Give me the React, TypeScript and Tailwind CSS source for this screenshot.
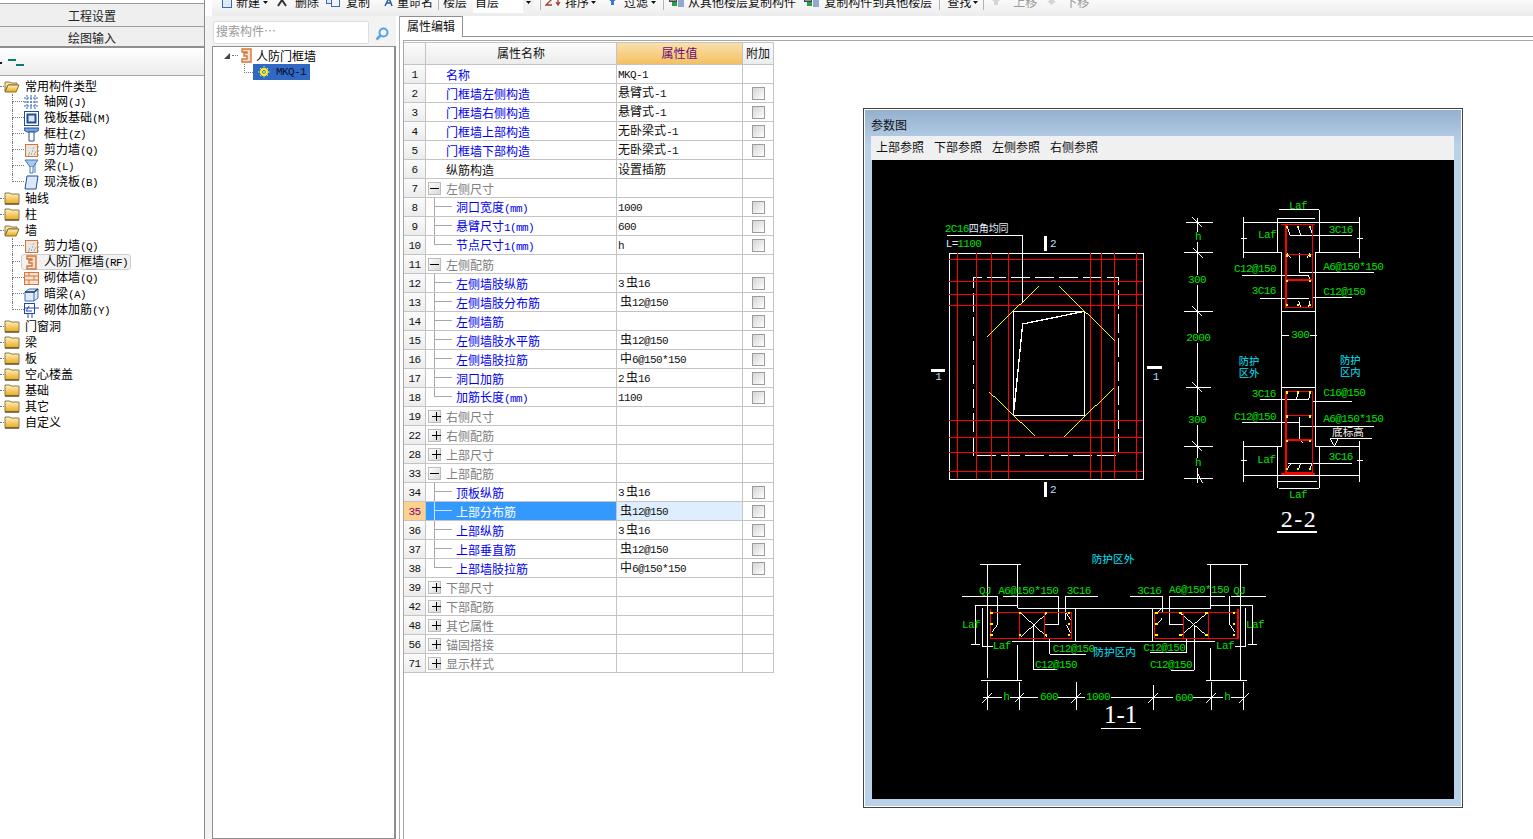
import React from "react";

const cjk = "font-['Noto_Sans_CJK_SC',sans-serif]";
const mono = "font-['Liberation_Mono','Noto_Sans_CJK_SC',monospace]";

// ascii runs get the narrow 6px look of the original bitmap font
const T = ({ s }: { s: string }) => (
  <>
    {s.split(/([\x00-\x7f]+)/).map((part, i) =>
      /^[\x00-\x7f]+$/.test(part) ? (
        <span key={i} className={`${mono} text-[11px] tracking-[-0.6px]`}>
          {part}
        </span>
      ) : (
        <span key={i}>{part}</span>
      )
    )}
  </>
);

const Folder = ({ open }: { open?: boolean }) => (
  <svg width="16" height="14" viewBox="0 0 16 14" className="shrink-0">
    <defs>
      <linearGradient id="fold" x1="0" y1="0" x2="0" y2="1">
        <stop offset="0" stopColor="#fff3b8" />
        <stop offset="1" stopColor="#e8a820" />
      </linearGradient>
    </defs>
    {open ? (
      <>
        <path d="M1 3h5l1 1h6v2H4L1 12z" fill="#f6e3a0" stroke="#8a7a50" />
        <path d="M1 13l3-7h11l-3 7z" fill="url(#fold)" stroke="#8a6a20" />
      </>
    ) : (
      <>
        <path d="M1 2h5l1 1h8v10H1z" fill="url(#fold)" stroke="#8a7a50" />
        <path d="M1 13h14" stroke="#4a3a10" />
      </>
    )}
  </svg>
);

const TreeIcon = ({ name }: { name: string }) => {
  const blue = "#2f62b0";
  const orange = "#d2763c";
  return (
    <svg width="15" height="15" viewBox="0 0 15 15" className="shrink-0">
      {name === "grid" && (
        <path d="M3 0v15M7 0v15M11 0v15M0 3h15M0 7h15M0 11h15" stroke={blue} strokeDasharray="2 1" fill="none" />
      )}
      {name === "raft" && (
        <>
          <rect x="0.5" y="0.5" width="14" height="14" fill="#fff" stroke="#1f4f96" strokeWidth="1" />
          <rect x="3.5" y="3.5" width="8" height="8" fill="#dfe8f4" stroke="#1f4f96" strokeWidth="2" />
        </>
      )}
      {name === "column" && (
        <>
          <path d="M0 1h15v2l-3 2H3L0 3z" fill="#7aa6dc" stroke="#1f4f96" />
          <path d="M5 5h5v9H5z" fill="#fff" stroke="#1f4f96" />
        </>
      )}
      {name === "shear" && (
        <>
          <rect x="1.5" y="1.5" width="12" height="12" fill="#e8e4de" stroke={orange} />
          <path d="M5 10h1M8 8h1M10 11h1M7 11h1M9 5h1M4 12h1M11 9h1" stroke="#888" />
          <path d="M13 4h2M13 8h2M13 12h2" stroke={orange} />
        </>
      )}
      {name === "beam" && (
        <>
          <path d="M1 1h13L9 8H6z" fill="#a8c8ec" stroke="#3f78c0" />
          <path d="M6 8v6h3V8M11 5v9" fill="#fff" stroke="#3f78c0" />
        </>
      )}
      {name === "slab" && <path d="M3 1h11l-2 13H1z" fill="#dce8f8" stroke="#1f4f96" />}
      {name === "door" && (
        <path d="M3 1h9v13H3v-3h5V8H5V5h3V4H3z" fill="#f8ddc8" stroke={orange} strokeWidth="1.4" />
      )}
      {name === "brick" && (
        <>
          <rect x="0.5" y="1.5" width="14" height="12" fill="#fbe2cf" stroke={orange} />
          <path d="M0 5h15M0 9h15M5 1v4M10 5v4M5 9v4" stroke={orange} fill="none" />
        </>
      )}
      {name === "lintel" && (
        <>
          <path d="M1 5l4-3h9v9l-4 3H1z" fill="#dfeaf6" stroke="#3f6ea8" />
          <path d="M1 5h9v9M10 5l4-3" fill="none" stroke="#3f6ea8" />
          <path d="M1 5h9l4-3" fill="none" stroke="#20466f" strokeWidth="1.5" />
        </>
      )}
      {name === "rebar" && (
        <>
          <rect x="0.5" y="0.5" width="10" height="10" fill="none" stroke="#2244bb" />
          <path d="M0 5h15M5 3l-3 5h6M4 10v5M8 10v5" fill="none" stroke="#2244bb" />
        </>
      )}
    </svg>
  );
};

type TreeChild = { label: string; key?: string; icon: string; active?: boolean };
type TreeGroup = { label: string; items?: TreeChild[] };

const tree: TreeGroup[] = [
  {
    label: "常用构件类型",
    items: [
      { label: "轴网", key: "(J)", icon: "grid" },
      { label: "筏板基础", key: "(M)", icon: "raft" },
      { label: "框柱", key: "(Z)", icon: "column" },
      { label: "剪力墙", key: "(Q)", icon: "shear" },
      { label: "梁", key: "(L)", icon: "beam" },
      { label: "现浇板", key: "(B)", icon: "slab" },
    ],
  },
  { label: "轴线" },
  { label: "柱" },
  {
    label: "墙",
    items: [
      { label: "剪力墙", key: "(Q)", icon: "shear" },
      { label: "人防门框墙", key: "(RF)", icon: "door", active: true },
      { label: "砌体墙", key: "(Q)", icon: "brick" },
      { label: "暗梁", key: "(A)", icon: "lintel" },
      { label: "砌体加筋", key: "(Y)", icon: "rebar" },
    ],
  },
  { label: "门窗洞" },
  { label: "梁" },
  { label: "板" },
  { label: "空心楼盖" },
  { label: "基础" },
  { label: "其它" },
  { label: "自定义" },
];

const ComponentTree = () => (
  <div className="flex-1 border-t border-[#a8a8a8] bg-white pt-[2px] text-[12px] leading-4 text-black">
    {tree.map((group) => (
      <div key={group.label}>
        <div className="flex h-4 items-center">
          <div className="w-1 border-t border-dotted border-[#777]" />
          <Folder open={!!group.items} />
          <span className="ml-[5px]">{group.label}</span>
        </div>
        {group.items?.map((item, i) => (
          <div key={item.label + i} className="ml-3 flex h-4 items-center">
            <div className="flex h-4 w-3 shrink-0 flex-col">
              <div className="h-2 border-b border-l border-dotted border-[#777]" />
              {i < group.items!.length - 1 && <div className="h-2 border-l border-dotted border-[#777]" />}
              {i === group.items!.length - 1 && <div className="h-2" />}
            </div>
            <div
              className={
                item.active
                  ? "-ml-[3px] flex h-4 w-[110px] items-center rounded-[3px] border border-[#cfcfcf] bg-[#f2f2f2] pl-[2px]"
                  : "flex h-4 items-center"
              }
            >
              <TreeIcon name={item.icon} />
              <span className="ml-[5px] whitespace-nowrap">
                <T s={item.label + item.key} />
              </span>
            </div>
          </div>
        ))}
      </div>
    ))}
  </div>
);

const LeftPane = () => (
  <div className={`flex w-[205px] shrink-0 flex-col border-r border-[#8c8c8c] ${cjk}`}>
    <div className="h-[4px] border-b border-[#9a9a9a] bg-white" />
    <div className="flex h-[23px] items-center justify-center border-b border-[#a0a0a0] bg-[#efefef] pr-[20px] pt-[2px] text-[12px] text-[#222]">
      工程设置
    </div>
    <div className="flex h-[21px] items-center justify-center border-b-2 border-[#8e8e8e] bg-[#efefef] pr-[20px] pt-[2px] text-[12px] text-[#222]">
      绘图输入
    </div>
    <div className="flex h-[27px] items-center bg-gradient-to-b from-white to-[#ececec] pt-[2px]">
      <div className="h-[2px] w-[2px] bg-[#114]" />
      <div className="ml-[6px] flex flex-col">
        <div className="h-[2px] w-2 bg-[#0d7a78]" />
        <div className="ml-2 mt-[3px] h-[2px] w-2 bg-[#0d7a78]" />
      </div>
    </div>
    <ComponentTree />
  </div>
);

const Caret = ({ ml }: { ml: string }) => (
  <svg width="5" height="3" viewBox="0 0 5 3" className={`mt-[1px] shrink-0 ${ml}`}>
    <path d="M0 0h5L2.5 3z" fill="#111" />
  </svg>
);

const Sep = ({ ml }: { ml: string }) => <div className={`h-[10px] w-px shrink-0 bg-[#b4b4b4] ${ml}`} />;

const ToolIcon = ({ w, ml, kind }: { w: number; ml: string; kind: string }) => (
  <svg width={w} height="12" viewBox={`0 0 ${w} 12`} className={`-mt-[3px] shrink-0 ${ml}`}>
    {kind === "new" && <rect x="0.5" y="2.5" width="9" height="8" fill="#dfe9f7" stroke="#3b6bb3" />}
    {kind === "del" && <path d="M1 9l4-6 4 6" stroke="#333" strokeWidth="2" fill="none" />}
    {kind === "copy" && (
      <>
        <rect x="0.5" y="0.5" width="8" height="6" fill="#dfe9f7" stroke="#3b6bb3" />
        <rect x="5.5" y="2.5" width="8" height="7" fill="#f2f6fc" stroke="#3b6bb3" />
      </>
    )}
    {kind === "rename" && <path d="M8 9L12 1l3 8M9.5 6h4" stroke="#2c5aa8" strokeWidth="1.5" fill="none" />}
    {kind === "sort" && (
      <path d="M1 2h6L1 8h6M13 1v6M11 5l2 3 2-3" stroke="#a04030" fill="none" strokeWidth="1.3" />
    )}
    {kind === "filter" && <path d="M4.5 0l3 4H6v4H3V4H1.5z" fill="#3b78c8" />}
    {kind === "floor" && (
      <>
        <rect x="0.5" y="0.5" width="7" height="4" fill="#8a9ab0" stroke="#444" />
        <rect x="3" y="5" width="5" height="4" fill="#2aa040" />
        <path d="M9 1h6M9 3h6M9 5h6M9 7h6M9 9h6" stroke="#2c5aa8" />
      </>
    )}
    {kind === "up" && <path d="M6 0l4 4H8v4H4V4H2z" fill="#d4d4d4" />}
    {kind === "down" && <path d="M4 0h5v4h2L6.500 8 2 4h2z" fill="#d4d4d4" />}
  </svg>
);

const ToolText = ({ ml, children, muted }: { ml: string; children: React.ReactNode; muted?: boolean }) => (
  <span className={`shrink-0 whitespace-nowrap leading-[12px] -mt-[4px] ${ml} ${muted ? "text-[#9a9a9a]" : "text-[#111]"}`}>
    {children}
  </span>
);

const Toolbar = () => (
  <div className={`flex h-4 shrink-0 items-start overflow-hidden bg-gradient-to-b from-[#fafafa] to-[#ececec] text-[12px] ${cjk}`}>
    <ToolIcon w={10} ml="ml-[10px]" kind="new" />
    <ToolText ml="ml-[4px]">新建</ToolText>
    <Caret ml="ml-[3px]" />
    <ToolIcon w={11} ml="ml-[9px]" kind="del" />
    <ToolText ml="ml-[7px]">删除</ToolText>
    <ToolIcon w={15} ml="ml-[7px]" kind="copy" />
    <ToolText ml="ml-[5px]">复制</ToolText>
    <ToolIcon w={16} ml="ml-[7px]" kind="rename" />
    <ToolText ml="ml-[4px]">重命名</ToolText>
    <Sep ml="ml-[5px]" />
    <ToolText ml="ml-[4px]">楼层</ToolText>
    <div className="ml-[6px] flex h-[13px] w-[60px] shrink-0 items-start justify-between bg-white pl-[2px]">
      <span className="-mt-[4px] leading-[12px] text-[#111]">首层</span>
      <div className="flex h-[13px] w-[10px] justify-center bg-[#f0f0f0]">
        <Caret ml="ml-0" />
      </div>
    </div>
    <Sep ml="ml-[7px]" />
    <ToolIcon w={16} ml="ml-[4px]" kind="sort" />
    <ToolText ml="ml-[4px]">排序</ToolText>
    <Caret ml="ml-[2px]" />
    <ToolIcon w={9} ml="ml-[12px]" kind="filter" />
    <ToolText ml="ml-[7px]">过滤</ToolText>
    <Caret ml="ml-[3px]" />
    <Sep ml="ml-[7px]" />
    <ToolIcon w={16} ml="ml-[5px]" kind="floor" />
    <ToolText ml="ml-[3px]">从其他楼层复制构件</ToolText>
    <ToolIcon w={16} ml="ml-[8px]" kind="floor" />
    <ToolText ml="ml-[4px]">复制构件到其他楼层</ToolText>
    <Sep ml="ml-[7px]" />
    <ToolText ml="ml-[7px]">查找</ToolText>
    <Caret ml="ml-[2px]" />
    <Sep ml="ml-[5px]" />
    <ToolIcon w={14} ml="ml-[6px]" kind="up" />
    <ToolText ml="ml-[9px]" muted>上移</ToolText>
    <ToolIcon w={14} ml="ml-[8px]" kind="down" />
    <ToolText ml="ml-[6px]" muted>下移</ToolText>
  </div>
);

const MiddlePane = () => (
  <div className={`flex w-[184px] shrink-0 flex-col bg-[#f3f3f3] ${cjk}`}>
    <div className="flex h-[30px] items-start pl-px pt-[5px]">
      <div className="flex h-[23px] w-[156px] items-center rounded-[2px] border border-[#dedede] bg-white pb-[3px] pl-[2px] text-[12px] text-[#9a9a9a]">
        搜索构件…
      </div>
      <svg width="14" height="14" viewBox="0 0 14 14" className="ml-[6px] mt-[6px]">
        <circle cx="8.500" cy="5.500" r="4" fill="#eef6fd" stroke="#57a4e4" strokeWidth="2" />
        <path d="M5.500 8.500L1.500 12.500" stroke="#57a4e4" strokeWidth="2.500" />
      </svg>
    </div>
    <div className="flex-1 border border-r-2 border-[#8f8f8f] bg-white text-[12px] text-black">
      <div className="flex h-[17px] items-center pl-[11px]">
        <svg width="6" height="6" viewBox="0 0 6 6">
          <path d="M6 0v6H0z" fill="#444" />
        </svg>
        <div className="ml-[2px] w-[6px] border-t border-dotted border-[#777]" />
        <div className="ml-[1px]">
          <TreeIcon name="door" />
        </div>
        <span className="ml-[2px]">人防门框墙</span>
      </div>
      <div className="flex h-4 items-start pl-[31px]">
        <div className="h-[9px] w-[9px] border-b border-l border-dotted border-[#777]" />
        <div className="flex h-4 w-[57px] items-center bg-[#2f69c4] pl-[5px]">
          <svg width="12" height="12" viewBox="0 0 12 12">
            <circle cx="6" cy="6" r="3" fill="none" stroke="#ffee33" strokeWidth="2" />
            <path d="M6 0v12M0 6h12M2 2l8 8M10 2l-8 8" stroke="#ffee33" strokeDasharray="1.500 1" />
          </svg>
          <span className={`ml-[6px] ${mono} text-[11px] tracking-[-0.6px] text-[#0a0f2a]`}>MKQ-1</span>
        </div>
      </div>
    </div>
  </div>
);

type Row = {
  no: number;
  name: string;
  kind: "link" | "plain" | "open" | "closed" | "child" | "last";
  value?: string;
  check?: boolean;
  selected?: boolean;
};

const rows: Row[] = [
  { no: 1, name: "名称", kind: "link", value: "MKQ-1" },
  { no: 2, name: "门框墙左侧构造", kind: "link", value: "悬臂式-1", check: true },
  { no: 3, name: "门框墙右侧构造", kind: "link", value: "悬臂式-1", check: true },
  { no: 4, name: "门框墙上部构造", kind: "link", value: "无卧梁式-1", check: true },
  { no: 5, name: "门框墙下部构造", kind: "link", value: "无卧梁式-1", check: true },
  { no: 6, name: "纵筋构造", kind: "plain", value: "设置插筋" },
  { no: 7, name: "左侧尺寸", kind: "open" },
  { no: 8, name: "洞口宽度(mm)", kind: "child", value: "1000", check: true },
  { no: 9, name: "悬臂尺寸1(mm)", kind: "child", value: "600", check: true },
  { no: 10, name: "节点尺寸1(mm)", kind: "last", value: "h", check: true },
  { no: 11, name: "左侧配筋", kind: "open" },
  { no: 12, name: "左侧墙肢纵筋", kind: "child", value: "3虫16", check: true },
  { no: 13, name: "左侧墙肢分布筋", kind: "child", value: "虫12@150", check: true },
  { no: 14, name: "左侧墙筋", kind: "child", check: true },
  { no: 15, name: "左侧墙肢水平筋", kind: "child", value: "虫12@150", check: true },
  { no: 16, name: "左侧墙肢拉筋", kind: "child", value: "中6@150*150", check: true },
  { no: 17, name: "洞口加筋", kind: "child", value: "2虫16", check: true },
  { no: 18, name: "加筋长度(mm)", kind: "last", value: "1100", check: true },
  { no: 19, name: "右侧尺寸", kind: "closed" },
  { no: 22, name: "右侧配筋", kind: "closed" },
  { no: 28, name: "上部尺寸", kind: "closed" },
  { no: 33, name: "上部配筋", kind: "open" },
  { no: 34, name: "顶板纵筋", kind: "child", value: "3虫16", check: true },
  { no: 35, name: "上部分布筋", kind: "child", value: "虫12@150", check: true, selected: true },
  { no: 36, name: "上部纵筋", kind: "child", value: "3虫16", check: true },
  { no: 37, name: "上部垂直筋", kind: "child", value: "虫12@150", check: true },
  { no: 38, name: "上部墙肢拉筋", kind: "last", value: "中6@150*150", check: true },
  { no: 39, name: "下部尺寸", kind: "closed" },
  { no: 42, name: "下部配筋", kind: "closed" },
  { no: 48, name: "其它属性", kind: "closed" },
  { no: 56, name: "锚固搭接", kind: "closed" },
  { no: 71, name: "显示样式", kind: "closed" },
];

const ExpandBox = ({ open }: { open: boolean }) => (
  <div className="ml-[2px] mr-[5px] flex h-[13px] w-[13px] shrink-0 items-center justify-center border border-[#bcbcbc] bg-gradient-to-br from-white to-[#d8d8d8]">
    <div className="flex h-[9px] w-[9px] items-center justify-center">
      <div className="h-px w-[9px] bg-black" />
      {!open && <div className="-ml-[5px] h-[9px] w-px bg-black" />}
    </div>
  </div>
);

const Connector = ({ last, selected }: { last: boolean; selected?: boolean }) => (
  <div className="ml-2 mr-1 flex h-[18px] w-[18px] shrink-0 flex-col">
    <div className={`h-[9px] border-b border-l ${selected ? "border-[#cfe4fb]" : "border-[#a8a8a8]"}`} />
    <div className={`h-[9px] ${last ? "" : "border-l"} ${selected ? "border-[#cfe4fb]" : "border-[#a8a8a8]"}`} />
  </div>
);

const Value = ({ value }: { value: string }) => {
  const count = value.match(/^(\d)虫(\d+)$/);
  if (count) {
    return (
      <span className="pl-[1px]">
        <T s={count[1]} />
        <span className="ml-[2px]">虫</span>
        <T s={count[2]} />
      </span>
    );
  }
  const indent = value.startsWith("虫") || value.startsWith("中");
  return (
    <span className={indent ? "pl-[3px]" : "pl-[1px]"}>
      <T s={value} />
    </span>
  );
};

const PropertyRow = ({ row }: { row: Row }) => {
  const isChild = row.kind === "child" || row.kind === "last";
  const isGroup = row.kind === "open" || row.kind === "closed";
  return (
    <div className="flex h-[19px] border-b border-[#c4c4c4] text-[12px] leading-[18px]">
      <div
        className={
          row.selected
            ? "flex w-[22px] shrink-0 items-center justify-center border-r border-[#c4c4c4] bg-[#fdd28c] pt-[2px] text-[#800080]"
            : "flex w-[22px] shrink-0 items-center justify-center border-r border-[#c4c4c4] bg-gradient-to-b from-[#fbfbfb] to-[#ececec] pt-[2px] text-[#111]"
        }
      >
        <span className={`${mono} text-[11px] tracking-[-0.6px]`}>{row.no}</span>
      </div>
      <div
        className={
          row.selected
            ? "flex w-[191px] shrink-0 items-center border-r border-[#c4c4c4] bg-[#3399ff] text-white"
            : "flex w-[191px] shrink-0 items-center border-r border-[#c4c4c4]"
        }
      >
        {isGroup && <ExpandBox open={row.kind === "open"} />}
        {isChild && <Connector last={row.kind === "last"} selected={row.selected} />}
        <span
          className={
            row.selected
              ? "whitespace-nowrap pt-[2px]"
              : isGroup
                ? "whitespace-nowrap pt-[2px] text-[#808080]"
                : row.kind === "plain"
                  ? "ml-5 whitespace-nowrap pt-[2px] text-[#111]"
                  : row.kind === "link"
                    ? "ml-5 whitespace-nowrap pt-[2px] text-[#0000ee]"
                    : "whitespace-nowrap pt-[2px] text-[#0000ee]"
          }
        >
          <T s={row.name} />
        </span>
      </div>
      <div
        className={
          row.selected
            ? "flex w-[126px] shrink-0 items-center whitespace-nowrap border-r border-[#c4c4c4] bg-[#deeefe] text-[#111]"
            : "flex w-[126px] shrink-0 items-center whitespace-nowrap border-r border-[#c4c4c4] text-[#111]"
        }
      >
        {row.value && <Value value={row.value} />}
      </div>
      <div className="flex w-[31px] shrink-0 items-center justify-center border-r border-[#c4c4c4]">
        {row.check && (
          <div className="h-[13px] w-[13px] border border-[#9c9c9c] bg-gradient-to-br from-[#d4d4d4] to-white" />
        )}
      </div>
    </div>
  );
};

const PropertyTable = () => (
  <div className="mt-px w-[370px]">
    <div className="flex h-[23px] border-b border-t border-[#c4c4c4] pb-0 text-[12px]">
      <div className="w-[22px] border-r border-[#c4c4c4] bg-gradient-to-b from-[#fbfbfb] to-[#ececec]" />
      <div className="flex w-[191px] items-center justify-center border-r border-[#c4c4c4] bg-gradient-to-b from-[#fbfbfb] to-[#ececec] pb-[2px] text-[#111]">
        属性名称
      </div>
      <div className="flex w-[126px] items-center justify-center border-r border-[#c4c4c4] bg-gradient-to-b from-[#fbe0aa] to-[#f3c061] pb-[2px] text-[#6a0a7a]">
        属性值
      </div>
      <div className="flex w-[31px] items-center justify-center border-r border-[#c4c4c4] bg-gradient-to-b from-[#fbfbfb] to-[#ececec] pb-[2px] text-[#111]">
        附加
      </div>
    </div>
    {rows.map((row) => (
      <PropertyRow key={row.no} row={row} />
    ))}
  </div>
);

const green = "#00e000";
const G = ({ x, y, t, fill = green, size = 33 }: { x: number; y: number; t: string; fill?: string; size?: number }) => (
  <text x={x} y={y} fill={fill} fontSize={size} letterSpacing={size === 33 ? -1.8 : 0}>
    {t}
  </text>
);

const Dots = ({ pts }: { pts: number[][] }) => (
  <>
    {pts.map(([x, y], i) => (
      <rect key={i} x={x - 3.5} y={y - 3.5} width="7" height="7" fill="#ffff00" />
    ))}
  </>
);

// zoomed crop coordinates, so 3 units = 1px on the page
const PlanView = () => (
  <g transform="translate(930 200) scale(0.33333)" fill="none" strokeWidth="3">
    <rect x="58" y="160" width="582" height="678" stroke="#fff" />
    <path d="M131 768V232H565V768H131" stroke="#fff" strokeDasharray="58 14" />
    <path
      d="M58 178H640M58 244H640M58 283H640M58 316H640M58 661H640M58 712H640M58 757H640M58 814H640M82 160V838M139 160V838M184 160V838M235 160V838M481 160V838M514 160V838M553 160V838M619 160V838"
      stroke="#ff0000"
    />
    <rect x="250" y="334" width="213" height="312" stroke="#fff" />
    <path d="M463 334L278 372L252 630" stroke="#fff" strokeWidth="4" />
    <path d="M52 106H277V310" stroke="#fff" />
    <path d="M172 409L326 259M388 259L556 424M178 576L314 707M402 710L551 565" stroke="#ffff00" />
    <path d="M347 108V152M347 847V891M3 511H45M651 502H696" stroke="#fff" strokeWidth="9" />
    <G x={44} y={96} t="2C16" />
    <G x={116} y={96} t="四角均同" fill="#e8f0ff" size={30} />
    <G x={47} y={140} t="L=" fill="#d8e8ff" />
    <G x={82} y={140} t="1100" />
    <G x={360} y={141} t="2" fill="#bcd8ff" />
    <G x={360} y={879} t="2" fill="#bcd8ff" />
    <G x={16} y={541} t="1" fill="#bcd8ff" />
    <G x={668} y={541} t="1" fill="#bcd8ff" />
  </g>
);

const SectionTwo = () => (
  <g transform="translate(1170 190) scale(0.33333)" fill="none" strokeWidth="3">
    <path
      stroke="#fff"
      d="M83 85V125M83 155V255M83 285V430M83 460V675M83 705V805M83 835V880M48 97H128M42 189H128M42 364H128M48 592H122M42 769H128M42 865H128M68 82L98 112M68 174L98 204M68 349L98 379M68 577L98 607M68 754L98 784M83 850L98 880"
    />
    <path
      stroke="#fff"
      d="M220 97H568M220 80V203M568 80V203M220 187H336M436 187H568M328 60H448M448 60V187M322 85H436M322 85V187M336 187V770M436 187V770M336 364H436M336 592H436M212 145H230M560 145H578"
    />
    <path
      stroke="#fff"
      d="M360 136H546M216 256H416M270 325H416M426 322H546M388 247H612M388 190V247M270 630H416M426 634H546M216 699H388M388 710H612M388 680V745M355 820H546M480 745H606M480 745L493 768L506 745M333 436H358M420 436H442"
    />
    <path
      stroke="#fff"
      d="M220 770H336M436 770H568M220 858H568M220 754V875M568 754V875M322 770V895M448 770V895M322 875H440M328 895H448M212 812H230M560 812H578"
    />
    <path
      stroke="#fff"
      d="M352 112L360 136M385 112L392 136M420 112L428 136M352 332L345 350M385 332L392 350M420 332L416 350M352 260L345 270M415 256L420 270M352 610L345 630M385 610L378 630M420 610L416 630M352 838L362 820M385 838L392 820M420 838L426 820M388 745L398 760M352 190L362 204M420 190L410 204"
    />
    <path
      stroke="#ff0000"
      strokeWidth="4"
      d="M334 103H436M348 103V352H428V103M348 193H428M348 270H428M348 604H428V848H348V604M334 852H436M348 676H428M348 750H428"
    />
    <Dots
      pts={[
        [352, 112], [385, 112], [420, 112], [352, 197], [420, 197], [352, 274], [420, 274], [352, 345], [385, 345], [420, 345],
        [352, 608], [385, 608], [420, 608], [352, 680], [420, 680], [352, 754], [420, 754], [352, 838], [385, 838], [420, 838],
      ]}
    />
    <G x={357} y={56} t="Laf" />
    <G x={75} y={150} t="h" />
    <G x={54} y={278} t="300" />
    <G x={49} y={452} t="2000" />
    <G x={54} y={698} t="300" />
    <G x={75} y={828} t="h" />
    <G x={264} y={143} t="Laf" />
    <G x={476} y={130} t="3C16" />
    <G x={192} y={246} t="C12@150" />
    <G x={460} y={240} t="A6@150*150" />
    <G x={245} y={312} t="3C16" />
    <G x={460} y={315} t="C12@150" />
    <G x={364} y={443} t="300" />
    <G x={245} y={622} t="3C16" />
    <G x={460} y={618} t="C16@150" />
    <G x={192} y={690} t="C12@150" />
    <G x={460} y={696} t="A6@150*150" />
    <G x={262} y={818} t="Laf" />
    <G x={476} y={810} t="3C16" />
    <G x={357} y={923} t="Laf" />
    <G x={206} y={525} t="防护" fill="#00e8ff" size={31} />
    <G x={206} y={560} t="区外" fill="#00e8ff" size={31} />
    <G x={510} y={522} t="防护" fill="#00e8ff" size={31} />
    <G x={510} y={558} t="区内" fill="#00e8ff" size={31} />
    <G x={486} y={738} t="底标高" fill="#f4f4f4" size={32} />
    <text x={332} y={1012} fill="#fff" fontSize="72" textLength="105" className="font-['Liberation_Serif',serif]">
      2-2
    </text>
    <path d="M321 1026H441" stroke="#fff" strokeWidth="5" />
  </g>
);

const SectionOne = () => (
  <g transform="translate(950 545) scale(0.33333)" fill="none" strokeWidth="3">
    <path
      stroke="#fff"
      d="M90 58H212M112 58V150M203 58V190M772 58H895M782 58V190M872 58V150M36 154H140M160 154H326V238H283M346 154H444M346 154V225M540 154H638V205M658 154H825M658 154V238H700M842 154H948"
    />
    <path
      stroke="#fff"
      d="M203 190H782M76 182H203M782 182H908M186 290H795M376 190V290M607 190V290M76 182V298M64 298H90M97 190V306H128M112 150V400M203 300V405M93 406H216M768 406H890M782 310V406M872 150V406M908 182V298M895 298H920M886 190V306H856M142 154V240L125 262M840 154V240L855 262"
    />
    <path
      stroke="#fff"
      d="M213 205L290 275M290 205L213 275M692 205L770 272M770 205L692 272M250 240V374H320M300 280V328H408M710 280V322H600M733 240V376H662M350 205L362 225M350 240L362 265M620 205L636 188M620 240L636 220"
    />
    <path
      stroke="#fff"
      d="M100 457H155M180 457H265M325 457H405M482 457H670M730 457H820M842 457H885M112 410V495M208 410V495M379 410V495M610 420V495M784 410V495M881 410V495M98 473L128 443M194 473L224 443M365 473L395 443M596 473L626 443M770 473L800 443M867 473L897 443"
    />
    <path stroke="#ff0000" d="M120 202H365V280H120M208 202V280M283 202V280M615 202H863M615 202V280H863M700 202V280M776 202V280" />
    <path stroke="#ff0000" strokeWidth="5" d="M122 192V282M864 192V282" />
    <Dots
      pts={[
        [125, 205], [125, 238], [125, 271], [210, 205], [288, 205], [210, 271], [288, 271], [358, 205], [358, 238], [358, 271],
        [620, 205], [620, 238], [620, 271], [692, 205], [770, 205], [692, 271], [770, 271], [853, 205], [853, 238], [853, 271],
      ]}
    />
    <G x={425} y={55} t="防护区外" fill="#00e8ff" size={32} />
    <G x={87} y={146} t="QJ" />
    <G x={145} y={146} t="A6@150*150" />
    <G x={350} y={146} t="3C16" />
    <G x={562} y={146} t="3C16" />
    <G x={657} y={144} t="A6@150*150" />
    <G x={850} y={146} t="QJ" />
    <G x={36} y={248} t="Laf" />
    <G x={888} y={248} t="Laf" />
    <G x={128} y={312} t="Laf" />
    <G x={798} y={312} t="Laf" />
    <G x={308} y={320} t="C12@150" />
    <G x={580} y={318} t="C12@150" />
    <G x={430} y={332} t="防护区内" fill="#00e8ff" size={32} />
    <G x={255} y={368} t="C12@150" />
    <G x={600} y={368} t="C12@150" />
    <G x={160} y={465} t="h" />
    <G x={270} y={465} t="600" />
    <G x={408} y={465} t="1000" />
    <G x={675} y={467} t="600" />
    <G x={823} y={465} t="h" />
    <text x={462} y={535} fill="#fff" fontSize="75" textLength="100" className="font-['Liberation_Serif',serif]">
      1-1
    </text>
    <path d="M453 551H573" stroke="#fff" strokeWidth="5" />
  </g>
);

const ParamDialog = () => (
  <div className={`absolute left-[863px] top-[108px] h-[700px] w-[600px] border border-[#444] ${cjk}`}>
    <div className="flex h-full flex-col border border-white bg-gradient-to-b from-[#95b0cf] from-0% to-[#b9d2ea] to-[5%] pl-[6px] pr-[7px]">
      <div className="flex h-[26px] shrink-0 items-center pt-[4px] text-[12px] text-[#111]">参数图</div>
      <div className="flex h-6 shrink-0 items-center gap-[10px] bg-[#f0f0f0] pb-[2px] pl-[5px] text-[12px] text-[#111]">
        <span>上部参照</span>
        <span>下部参照</span>
        <span>左侧参照</span>
        <span>右侧参照</span>
      </div>
      <svg
        viewBox="872 160 582 639"
        width="582"
        height="639"
        shapeRendering="crispEdges"
        className={`ml-px block shrink-0 bg-black ${mono}`}
      >
        <PlanView />
        <SectionTwo />
        <SectionOne />
      </svg>
    </div>
  </div>
);

const App = () => {
  return (
    <div className="relative flex h-[839px] w-[1533px] overflow-hidden bg-white">
      <LeftPane />
      <div className="flex min-w-0 flex-1 flex-col">
        <div className="ml-[7px]">
          <Toolbar />
        </div>
        <div className="flex min-h-0 flex-1">
          <div className="w-[7px] shrink-0 bg-[#f3f3f3]" />
          <MiddlePane />
          <div className={`ml-[3px] flex flex-1 flex-col border-l border-[#a8a8a8] ${cjk}`}>
            <div className="flex h-[21px] shrink-0">
              <div className="flex w-[63px] items-center justify-center border-r border-t border-[#8f8f8f] pb-[2px] text-[12px] text-[#111]">
                属性编辑
              </div>
              <div className="flex-1 border-b border-[#8f8f8f]" />
            </div>
            <div className="ml-[3px] mt-[3px] flex-1 border-l border-t border-[#a8a8a8]">
              <PropertyTable />
            </div>
          </div>
        </div>
      </div>
      <ParamDialog />
    </div>
  );
};

export default App;
